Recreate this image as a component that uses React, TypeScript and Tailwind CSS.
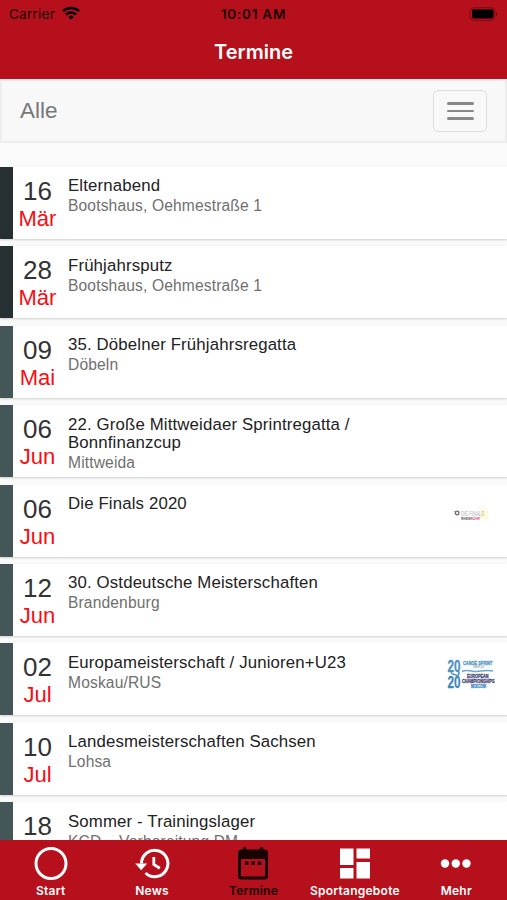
import type { ReactNode } from 'react'

type Termin = {
    day: string
    month: string
    title: string
    place?: string
    color: string
    logo?: ReactNode
}

function FinalsLogo() {
    return (
        <svg className="mb-[12px]" width="80" height="50" viewBox="0 0 80 50" fontFamily="Liberation Sans, sans-serif">
            <path d="M52 16L61 18L60 30L52 27Z" fill="#fff8ee" />
            <path d="M53 21h8v8h-8z" fill="#fffbd9" />
            <circle cx="30.2" cy="23" r="1.8" fill="none" stroke="#666" strokeWidth="1.3" />
            <path d="M27 21.5h3M27.5 24l2.5 1" stroke="#888" strokeWidth="0.8" />
            <text x="34" y="26" fontSize="6.5" textLength="23" lengthAdjust="spacingAndGlyphs" fill="#b9aeb2">DIE FINALS</text>
            <text x="34" y="29.5" fontSize="3.4" fontWeight="700" textLength="9.5" lengthAdjust="spacingAndGlyphs" fill="#555">RHEIN</text>
            <text x="43.5" y="29.5" fontSize="3.4" fontWeight="700" textLength="9.5" lengthAdjust="spacingAndGlyphs" fill="#e0457b">RUHR</text>
        </svg>
    )
}

function CanoeLogo() {
    return (
        <svg className="mb-[8px]" width="80" height="70" viewBox="0 0 80 70" fontFamily="Liberation Sans, sans-serif" fontWeight="700">
            <text x="20.5" y="32" fontSize="16" textLength="13" lengthAdjust="spacingAndGlyphs" fill="#4a8fc4" stroke="#4a8fc4" strokeWidth="0.3">20</text>
            <text x="20.5" y="47.5" fontSize="16" textLength="13" lengthAdjust="spacingAndGlyphs" fill="#3d84bd" stroke="#3d84bd" strokeWidth="0.3">20</text>
            <path d="M24 32.5c1 3 6 1 6.500 4M31 31c2 2 1 3 0 5" fill="none" stroke="#4a8fc4" strokeWidth="1.5" />
            <text x="36" y="25" fontSize="5.8" textLength="29.5" lengthAdjust="spacingAndGlyphs" fill="#4d94c8" stroke="#4d94c8" strokeWidth="0.3">CANOE SPRINT</text>
            <text x="46" y="28" fontSize="2.8" textLength="11" lengthAdjust="spacingAndGlyphs" fill="#8aa3bb">SENIOR U23</text>
            <path d="M35 31.5c6-3 10 .5 15 0s10-2 16-.5" fill="none" stroke="#6ba6cf" strokeWidth="1.5" />
            <text x="40" y="37.6" fontSize="5.4" textLength="21.5" lengthAdjust="spacingAndGlyphs" fill="#40416f" stroke="#40416f" strokeWidth="0.3">EUROPEAN</text>
            <text x="35" y="43" fontSize="5.4" textLength="32.5" lengthAdjust="spacingAndGlyphs" fill="#40416f" stroke="#40416f" strokeWidth="0.3">CHAMPIONSHIPS</text>
            <text x="44" y="47.8" fontSize="4.6" textLength="15" lengthAdjust="spacingAndGlyphs" fill="#3f8bc4" stroke="#3f8bc4" strokeWidth="0.3">MOSCOW</text>
        </svg>
    )
}

const termine: Termin[] = [
    { day: '16', month: 'Mär', title: 'Elternabend', place: 'Bootshaus, Oehmestraße 1', color: 'bg-[#263033]' },
    { day: '28', month: 'Mär', title: 'Frühjahrsputz', place: 'Bootshaus, Oehmestraße 1', color: 'bg-[#263033]' },
    { day: '09', month: 'Mai', title: '35. Döbelner Frühjahrsregatta', place: 'Döbeln', color: 'bg-[#455659]' },
    { day: '06', month: 'Jun', title: '22. Große Mittweidaer Sprintregatta / Bonnfinanzcup', place: 'Mittweida', color: 'bg-[#455659]' },
    { day: '06', month: 'Jun', title: 'Die Finals 2020', color: 'bg-[#455659]', logo: <FinalsLogo /> },
    { day: '12', month: 'Jun', title: '30. Ostdeutsche Meisterschaften', place: 'Brandenburg', color: 'bg-[#455659]' },
    { day: '02', month: 'Jul', title: 'Europameisterschaft / Junioren+U23', place: 'Moskau/RUS', color: 'bg-[#455659]', logo: <CanoeLogo /> },
    { day: '10', month: 'Jul', title: 'Landesmeisterschaften Sachsen', place: 'Lohsa', color: 'bg-[#455659]' },
    // last row runs under the tab bar, its month is never visible
    { day: '18', month: '', title: 'Sommer - Trainingslager', place: 'KCD – Vorbereitung DM', color: 'bg-[#455659]' },
]

function StatusBar() {
    return (
        <div className="grid h-[28px] grid-cols-3 items-center px-[9px] text-[13.5px] text-[#170204]">
            <div className="flex items-center gap-[6px]">
                <span className="w-[47px] tracking-[0.25px]">Carrier</span>
                <svg className="-mt-[2px]" width="18" height="14" viewBox="0 0 18 14" fill="none" stroke="#000" strokeWidth="2.5">
                    <path d="M1 5.2a11.4 11.4 0 0 1 16 0" />
                    <path d="M4 8.6a7.2 7.2 0 0 1 10 0" />
                    <path d="M6.4 10.9a3.7 3.7 0 0 1 5.2 0L9 13.6z" fill="#000" stroke="none" />
                </svg>
            </div>
            <div className="text-center font-semibold tracking-[0.75px] whitespace-nowrap">10:01 AM</div>
            <svg className="-mt-[1px] justify-self-end" width="29" height="14" viewBox="0 0 29 14">
                <rect x="1.2" y="0.7" width="24.6" height="12.6" rx="3.5" fill="none" stroke="#7b0b13" />
                <rect x="3" y="2.2" width="21.5" height="9.4" rx="2" fill="#000" />
                <path d="M27.3 5c1.6.8 1.6 3.2 0 4z" fill="#650910" />
            </svg>
        </div>
    )
}

function TerminRow({ termin }: { termin: Termin }) {
    return (
        <div className="flex h-[72px] shrink-0 bg-white shadow-[0_1px_2px_rgba(0,0,0,0.18)]">
            <div className={`w-[13px] shrink-0 ${termin.color}`} />
            <div className="w-[49px] shrink-0 pt-[11px] text-center">
                <div className="text-[26px] leading-[27px] text-[#333]">{termin.day}</div>
                <div className="text-[22px] leading-[27px] text-[#f80d12]">{termin.month}</div>
            </div>
            <div className="w-[320px] shrink-0 pt-[10.4px] pl-[6px]">
                <div className="text-[16.8px] leading-[18px] tracking-[0.15px] text-[#222]">{termin.title}</div>
                {termin.place && (
                    <div className="mt-[2px] text-[15.6px] leading-[18px] tracking-[0.14px] text-[#707070]">{termin.place}</div>
                )}
            </div>
            <div className="ml-auto flex items-center">{termin.logo}</div>
        </div>
    )
}

const tabs: { label: string; active?: boolean; icon: ReactNode }[] = [
    {
        label: 'Start',
        icon: <circle cx="18" cy="17.5" r="15" fill="none" stroke="currentColor" strokeWidth="3" />,
    },
    {
        label: 'News',
        icon: (
            <>
                <path d="M7.5 17.5A13.2 13.2 0 1 1 11.5 27" fill="none" stroke="currentColor" strokeWidth="3" />
                <path d="M1.200 17.5h12l-6 6.8z" fill="currentColor" />
                <path d="M19.8 11v7.5l6 3.8" fill="none" stroke="currentColor" strokeWidth="2.8" />
            </>
        ),
    },
    {
        label: 'Termine',
        active: true,
        icon: (
            <>
                <path d="M6.5 3.5h23a3.5 3.5 0 0 1 3.5 3.5V30a3.5 3.5 0 0 1-3.5 3.5h-23A3.5 3.5 0 0 1 3 30V7a3.5 3.5 0 0 1 3.5-3.5zM6 13V29.5q0 1 1 1h22q1 0 1-1V13z" fill="currentColor" fillRule="evenodd" />
                <path d="M9.5 2.5v4M26.5 2.5v4" stroke="currentColor" strokeWidth="3.5" strokeLinecap="round" />
                <path d="M10 15.5h3.5v3.5H10zM16.4 15.5h3.5v3.5h-3.5zM22.8 15.5h3.5v3.5h-3.5z" fill="currentColor" />
            </>
        ),
    },
    {
        label: 'Sportangebote',
        icon: <path d="M3 2.500h13.500v16.500H3zM19.500 2.500H33v10H19.500zM3 22h13.500v10.500H3zM19.500 16H33v16.500H19.500z" fill="currentColor" />,
    },
    {
        label: 'Mehr',
        icon: (
            <g fill="currentColor">
                <circle cx="7" cy="17.5" r="4.2" />
                <circle cx="17.8" cy="17.5" r="4.2" />
                <circle cx="28.5" cy="17.5" r="4.2" />
            </g>
        ),
    },
]

export default function App() {
    return (
        <div className="flex h-[900px] w-[507px] flex-col overflow-hidden bg-[#fafafa] font-['Liberation_Sans',sans-serif]">
            <header className="h-[79px] shrink-0 bg-[#b5101b] font-['Inter',sans-serif]">
                <StatusBar />
                <h1 className="text-center text-[20px] leading-[49px] font-semibold text-white">Termine</h1>
            </header>

            <nav className="flex h-[64px] shrink-0 items-center justify-between border-2 border-[#ededed] bg-[#f8f8f8] pr-[18px] pl-[18px]">
                <span className="text-[22.5px] text-[#777]">Alle</span>
                <button className="flex h-[42px] w-[54px] flex-col items-center justify-center gap-[5px] rounded-[5px] border border-[#ddd]">
                    <span className="h-[2.4px] w-[27px] rounded-full bg-[#888]" />
                    <span className="h-[2.4px] w-[27px] rounded-full bg-[#888]" />
                    <span className="h-[2.4px] w-[27px] rounded-full bg-[#888]" />
                </button>
            </nav>

            <main className="flex min-h-0 flex-1 flex-col gap-[7.4px] overflow-hidden pt-[24.1px]">
                {termine.map((termin) => (
                    <TerminRow key={termin.day + termin.title} termin={termin} />
                ))}
            </main>

            <footer className="grid h-[60px] shrink-0 grid-cols-5 bg-[#b5101b] font-['Inter',sans-serif]">
                {tabs.map((tab) => (
                    <div key={tab.label} className={`flex flex-col items-center pt-[6px] ${tab.active ? 'text-[#170204]' : 'text-white'}`}>
                        <svg width="36" height="36" viewBox="0 0 36 36">{tab.icon}</svg>
                        <span className="text-[12px] leading-[17px] font-semibold tracking-[0.25px]">{tab.label}</span>
                    </div>
                ))}
            </footer>
        </div>
    )
}
